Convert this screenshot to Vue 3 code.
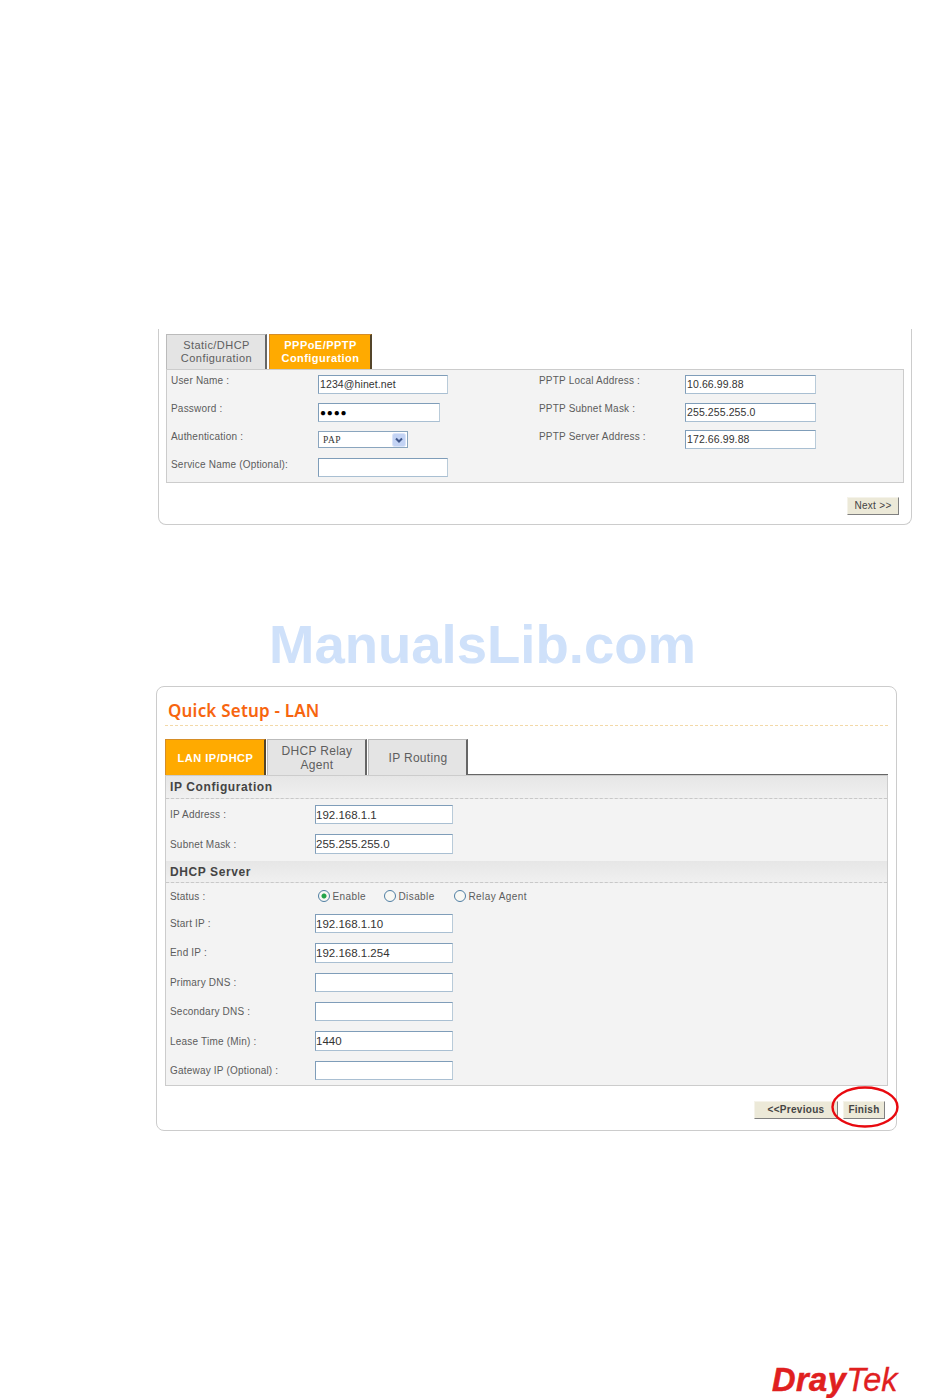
<script setup>
const wanLeft = [
  { label: 'User Name :', value: '1234@hinet.net', size: 'w130' },
  { label: 'Password :', value: '●●●●', size: 'w122 secret' },
  { label: 'Authentication :', select: 'PAP' },
  { label: 'Service Name (Optional):', value: '', size: 'w130 tall' },
]
const wanRight = [
  { label: 'PPTP Local Address :', value: '10.66.99.88' },
  { label: 'PPTP Subnet Mask :', value: '255.255.255.0' },
  { label: 'PPTP Server Address :', value: '172.66.99.88' },
]
const ipRows = [
  { label: 'IP Address :', value: '192.168.1.1' },
  { label: 'Subnet Mask :', value: '255.255.255.0' },
]
const dhcpRows = [
  { label: 'Start IP :', value: '192.168.1.10' },
  { label: 'End IP :', value: '192.168.1.254' },
  { label: 'Primary DNS :', value: '' },
  { label: 'Secondary DNS :', value: '' },
  { label: 'Lease Time (Min) :', value: '1440' },
  { label: 'Gateway IP (Optional) :', value: '' },
]
const radios = [
  { label: 'Enable', on: true, cls: 'r1' },
  { label: 'Disable', on: false, cls: 'r2' },
  { label: 'Relay Agent', on: false, cls: 'r3' },
]
</script>

<template>
  <div class="page">
    <section class="panel wan">
      <div class="tabs">
        <div class="tab">Static/DHCP<br />Configuration</div>
        <div class="tab active">PPPoE/PPTP<br />Configuration</div>
      </div>
      <div class="wan-body">
        <div class="wan-col left">
          <div v-for="r in wanLeft" :key="r.label" class="wan-row">
            <span class="label">{{ r.label }}</span>
            <div v-if="r.select" class="select">
              <span>{{ r.select }}</span>
              <svg class="arrow" width="14" height="14" viewBox="0 0 14 14">
                <rect x="0.5" y="0.5" width="13" height="13" rx="2" fill="#c3d3f4" stroke="#dbe5fa" />
                <path d="M4 5.5 7 8.5 10 5.5" fill="none" stroke="#41588c" stroke-width="2" />
              </svg>
            </div>
            <div v-else class="field" :class="r.size">{{ r.value }}</div>
          </div>
        </div>
        <div class="wan-col right">
          <div v-for="r in wanRight" :key="r.label" class="wan-row">
            <span class="label">{{ r.label }}</span>
            <div class="field w131">{{ r.value }}</div>
          </div>
        </div>
      </div>
      <div class="actions wan-actions">
        <div class="btn next">Next &gt;&gt;</div>
      </div>
    </section>

    <div class="watermark">ManualsLib.com</div>

    <section class="panel lan">
      <h1 class="title">Quick Setup - LAN</h1>
      <div class="tabs lined">
        <div class="tab active big">LAN IP/DHCP</div>
        <div class="tab big">DHCP Relay<br />Agent</div>
        <div class="tab big">IP Routing</div>
        <div class="tab-rest"></div>
      </div>
      <div class="lan-body">
        <h2 class="section first">IP Configuration</h2>
        <div class="rows ip">
          <div v-for="r in ipRows" :key="r.label" class="lan-row">
            <span class="label">{{ r.label }}</span>
            <div class="field w138">{{ r.value }}</div>
          </div>
        </div>
        <h2 class="section">DHCP Server</h2>
        <div class="status-row">
          <span class="label">Status :</span>
          <div class="radios">
            <span v-for="o in radios" :key="o.label" class="radio-item" :class="o.cls">
              <i class="radio" :class="{ on: o.on }"></i>{{ o.label }}
            </span>
          </div>
        </div>
        <div class="rows">
          <div v-for="r in dhcpRows" :key="r.label" class="lan-row">
            <span class="label">{{ r.label }}</span>
            <div class="field w138">{{ r.value }}</div>
          </div>
        </div>
      </div>
      <div class="actions lan-actions">
        <div class="btn prev">&lt;&lt;Previous</div>
        <div class="btn finish">Finish</div>
        <svg class="ring" width="70" height="44" viewBox="0 0 70 44">
          <ellipse cx="35" cy="22" rx="32.5" ry="19.5" fill="none" stroke="#e8090f" stroke-width="2.4" />
        </svg>
      </div>
    </section>

    <footer class="brand"><b>Dray</b><em>Tek</em></footer>
  </div>
</template>

<style>
html, body { margin: 0; background: #fff; }
</style>

<style scoped>
.page {
  position: relative;
  width: 950px;
  height: 1398px;
  overflow: hidden;
  padding-top: 329px;
  box-sizing: border-box;
  background: #fff;
  font-family: "Liberation Sans", Arial, sans-serif;
  color: #555;
}
.panel {
  position: relative;
  box-sizing: border-box;
  background: #fff;
  border: 1px solid #ccc;
  border-radius: 8px;
}
.wan {
  width: 754px;
  height: 196px;
  margin-left: 158px;
  border-top: 0;
  border-top-left-radius: 0;
  border-top-right-radius: 0;
  padding: 5px 7px 0;
}
.tabs { display: flex; box-sizing: border-box; }
.wan .tabs { height: 35px; gap: 2px; }
.tab {
  box-sizing: border-box;
  width: 101px;
  display: flex;
  align-items: center;
  justify-content: center;
  text-align: center;
  padding-left: 1px;
  font-size: 11px;
  line-height: 13.5px;
  letter-spacing: 0.45px;
  color: #5e5e5e;
  background: #e4e4e4;
  border-top: 1px solid #bbb;
  border-left: 1px solid #bbb;
  border-right: 2px solid #666;
}
.tab.active {
  width: 103px;
  color: #fff;
  font-weight: 700;
  background: #ffaa00;
  border-top-color: #d58d27;
  border-left-color: #d58d27;
  border-right-color: #54452a;
}
.wan-body {
  display: flex;
  box-sizing: border-box;
  height: 114px;
  background: #f3f3f3;
  border: 1px solid #ccc;
  padding: 5px 0 0 4px;
}
.wan-col { display: flex; flex-direction: column; }
.wan-col.left { width: 367px; }
.wan-row {
  display: grid;
  grid-template-columns: 147px auto;
  justify-content: start;
  align-items: start;
  flex: none;
  height: 28px;
}
.wan-col.left .wan-row:nth-child(3) { height: 27px; }
.wan-col.right .wan-row:nth-child(2) { height: 27px; }
.wan-row .label { margin-top: -1px; }
.wan-col.left .wan-row:nth-child(4) .label,
.wan-col.right .wan-row:nth-child(3) .label { margin-top: 0; }
.wan-col.right .label { padding-left: 1px; }
.label {
  font-size: 10px;
  line-height: 13px;
  letter-spacing: 0.2px;
  color: #5c5c5c;
  white-space: nowrap;
}
.field {
  box-sizing: border-box;
  height: 19px;
  padding-left: 1px;
  background: #fff;
  border: 1px solid #7f9db9;
  border-color: #7f9db9 #b9cbd9 #a9bfd2 #7f9db9;
  font-size: 10.5px;
  line-height: 17px;
  letter-spacing: 0.1px;
  color: #333;
  white-space: nowrap;
}
.w130 { width: 130px; }
.w122 { width: 122px; }
.w131 { width: 131px; }
.w138 { width: 138px; height: 19.5px; padding-left: 0; line-height: 18px; font-size: 11.5px; letter-spacing: 0; }
.tall { height: 19px; }
.secret { font-size: 10px; letter-spacing: 0.8px; color: #000; }
.select {
  position: relative;
  box-sizing: border-box;
  width: 90px;
  height: 17px;
  background: #fff;
  border: 1px solid #8aa5be;
  font-family: "Liberation Serif", serif;
  font-size: 9.5px;
  line-height: 16px;
  letter-spacing: 0.5px;
  padding-left: 4px;
  color: #333;
}
.arrow { position: absolute; right: 1px; top: 1px; }
.actions { display: flex; justify-content: flex-end; position: relative; }
.wan-actions { margin-top: 14px; padding-right: 5px; }
.btn {
  box-sizing: border-box;
  height: 18px;
  background: #ece9d8;
  border: 1px solid;
  border-color: #f5f3ea #808080 #808080 #f5f3ea;
  font-size: 10px;
  line-height: 16px;
  letter-spacing: 0.3px;
  text-align: center;
  color: #444;
  font-weight: 700;
}
.next { width: 52px; font-weight: 400; }
.watermark {
  margin: 83px 0 0 269px;
  height: 74px;
  font-size: 54.5px;
  line-height: 74px;
  font-weight: 700;
  color: #cfe1fa;
  white-space: nowrap;
}
.lan {
  width: 741px;
  height: 445px;
  margin-top: 4px;
  margin-left: 156px;
  padding: 0 8px;
}
.title {
  box-sizing: border-box;
  height: 39px;
  margin: 0;
  padding: 13px 0 0 3px;
  font-family: "Noto Sans", sans-serif;
  font-size: 17px;
  line-height: 22px;
  font-weight: 600;
  letter-spacing: 0.2px;
  color: #f7650f;
  border-bottom: 1px dashed #f3d9a8;
}
.lined {
  height: 36px;
  margin-top: 13px;
  gap: 1px;
}
.tab-rest { flex: 1; margin-left: -1px; border-bottom: 1px solid #666; }
.tab.big {
  width: 100px;
  height: 36px;
  font-size: 12px;
  line-height: 14px;
  letter-spacing: 0.3px;
}
.tab.active.big { width: 101px; font-size: 11px; letter-spacing: 0.5px; }
.lan-body {
  box-sizing: border-box;
  height: 311px;
  background: #f3f3f3;
  border: 1px solid #ccc;
}
.section {
  box-sizing: border-box;
  height: 22px;
  margin: 0;
  padding-left: 4px;
  font-size: 12px;
  line-height: 23px;
  font-weight: 700;
  letter-spacing: 0.6px;
  color: #444;
  background: linear-gradient(#e6e6e6, #f0f0f0);
  border-bottom: 1px dashed #c8c8c8;
}
.section.first { height: 23px; }
.rows { display: flex; flex-direction: column; }
.rows.ip { padding-top: 1px; padding-bottom: 2px; }
.lan-row {
  display: grid;
  grid-template-columns: 145px auto;
  justify-content: start;
  align-items: center;
  flex: none;
  height: 29.4px;
  padding-left: 4px;
}
.status-row {
  display: grid;
  grid-template-columns: 148px auto;
  justify-content: start;
  align-items: center;
  height: 26px;
  padding-left: 4px;
}
.status-row .label { margin-top: 1px; }
.radios { position: relative; display: flex; }
.radio-item {
  display: flex;
  align-items: center;
  font-size: 10px;
  line-height: 13px;
  letter-spacing: 0.4px;
  color: #5c5c5c;
  white-space: nowrap;
  margin-top: 2px;
}
.radio-item.r1 { width: 66px; }
.radio-item.r2 { width: 70px; }
.radio {
  box-sizing: border-box;
  width: 12px;
  height: 12px;
  margin-right: 2.5px;
  margin-top: -1px;
  border: 1px solid #4f7ea3;
  border-radius: 50%;
  background: #f8f8f4;
}
.radio.on { background: radial-gradient(circle, #22a44a 0 2px, #f8f8f4 3px); }
.lan-actions { margin-top: 15px; padding-right: 3px; gap: 5px; }
.prev { width: 84px; }
.finish { width: 42px; }
.ring { position: absolute; right: -11.5px; top: -16px; }
.brand {
  position: absolute;
  left: 772px;
  top: 1362px;
  display: flex;
  align-items: baseline;
  color: #e0201f;
  font-size: 32.5px;
  line-height: 36px;
  white-space: nowrap;
}
.brand b { font-weight: 700; font-style: italic; letter-spacing: 0.5px; -webkit-text-stroke: 0.6px #e0201f; }
.brand em { font-style: italic; font-weight: 400; -webkit-text-stroke: 0.3px #e0201f; }
</style>
